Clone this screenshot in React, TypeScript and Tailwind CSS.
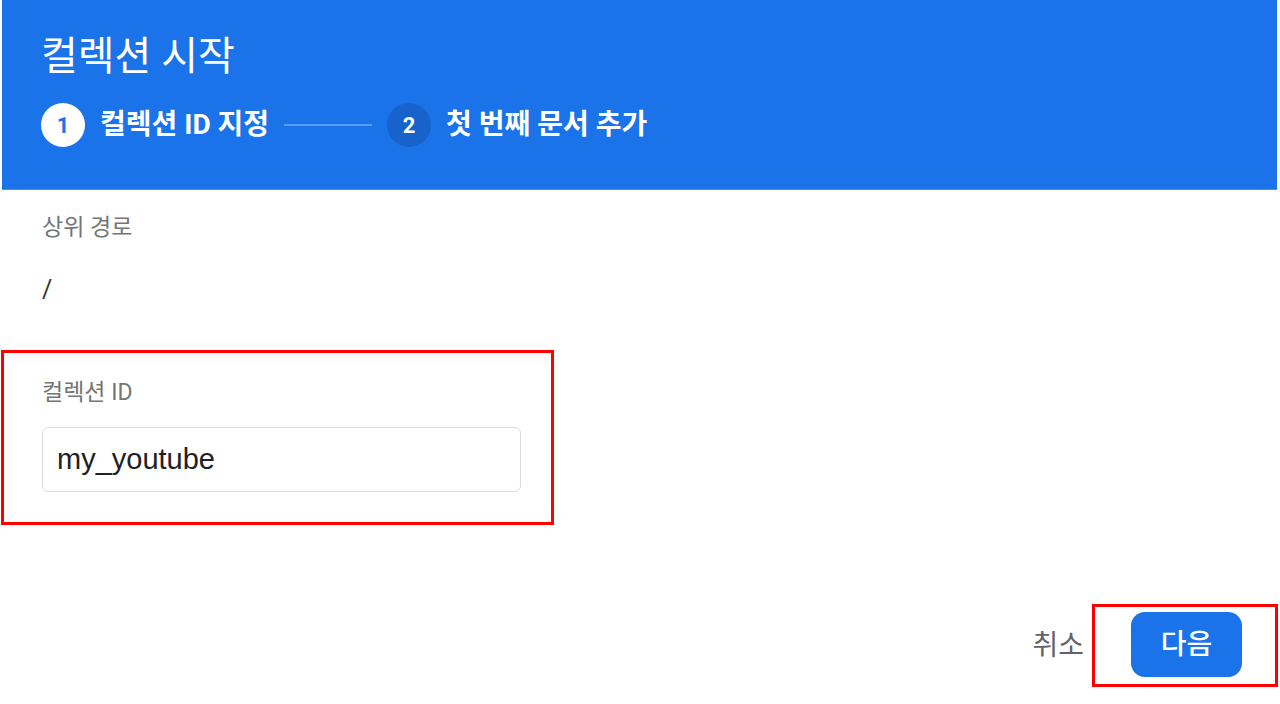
import React from 'react';

const font = { fontFamily: '"Roboto", "Noto Sans CJK KR", sans-serif' };

const App: React.FC = () => {
  return (
    <div className="w-[1280px] h-[704px] bg-white overflow-hidden" style={font}>
      {/* header */}
      <div className="ml-[2px] w-[1275px] h-[190px] bg-[#1a73e8] border-b border-[#4a90ee] pl-[39px] pt-[32px]">
        <h1 className="text-[40px] leading-[50px] text-white font-normal">컬렉션 시작</h1>
        <div className="flex items-center mt-[20px] h-[46px]">
          <div className="w-[44px] h-[44px] rounded-full bg-white text-[#1a73e8] flex items-center justify-center text-[22px] font-bold">1</div>
          <span className="ml-[15px] text-white text-[28px] font-bold">컬렉션 ID 지정</span>
          <div className="ml-[15px] w-[88px] h-[2px] bg-[#5a9af0]"></div>
          <div className="ml-[15px] w-[44px] h-[44px] rounded-full bg-[#1862cc] text-white flex items-center justify-center text-[22px] font-bold">2</div>
          <span className="ml-[15px] text-white text-[28px] font-bold">첫 번째 문서 추가</span>
        </div>
      </div>

      {/* body */}
      <div className="pl-[42px] pt-[24px]">
        <div className="text-[23px] leading-[28px] text-[#757575]">상위 경로</div>
        <div className="mt-[34px] text-[25px] leading-[28px] text-[#333]">/</div>
      </div>

      <div className="mt-[46px] ml-[1px] w-[553px] h-[175px] border-[3px] border-[#ff0000] pl-[38px] pt-[26px]">
        <div className="text-[23px] leading-[28px] text-[#757575]">컬렉션 ID</div>
        <div className="mt-[20px] w-[479px] h-[65px] border border-[#dadce0] rounded-[6px] flex items-center pl-[14px]">
          <span className="text-[29px] text-[#202124]" style={{ fontFamily: '"Liberation Sans", Arial, sans-serif' }}>my_youtube</span>
        </div>
      </div>

      {/* actions */}
      <div className="flex justify-end items-center mt-[79px] mr-[2px]">
        <span className="text-[28px] text-[#5f6368] mr-[8px]">취소</span>
        <div className="w-[186px] h-[83px] border-[3px] border-[#ff0000] pl-[36px] pt-[5px]">
          <button className="w-[111px] h-[65px] rounded-[14px] bg-[#1a73e8] text-white text-[28px] font-medium">다음</button>
        </div>
      </div>
    </div>
  );
};

export default App;
